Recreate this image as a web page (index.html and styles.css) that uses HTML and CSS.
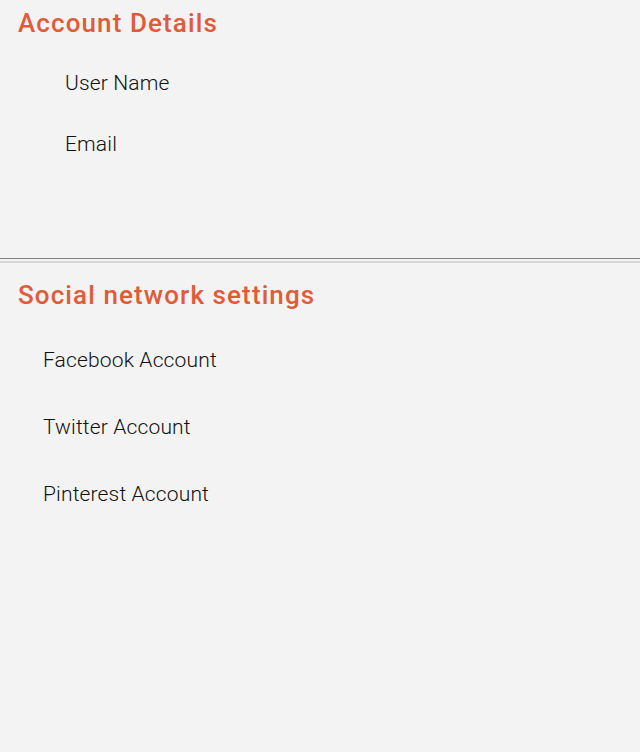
FILE: index.html
```html
<!DOCTYPE html>
<html>
<head>
<meta charset="utf-8">
<link rel="stylesheet" href="styles.css">
</head>
<body>
<section class="account">
  <h2 class="title">Account Details</h2>
  <ul class="fields fields-indent">
    <li class="field">User Name</li>
    <li class="field">Email</li>
  </ul>
</section>
<div class="divider"></div>
<section class="social">
  <h2 class="title">Social network settings</h2>
  <ul class="fields fields-social">
    <li class="field">Facebook Account</li>
    <li class="field">Twitter Account</li>
    <li class="field">Pinterest Account</li>
  </ul>
</section>
</body>
</html>
```
FILE: styles.css
```css
html, body {
  margin: 0;
  padding: 0;
  background: #f3f3f3;
}
body {
  font-family: Roboto, "Noto Sans", sans-serif;
  color: #111111;
}
.account {
  height: 258px;
  padding: 8px 18px 0;
  box-sizing: border-box;
}
.title {
  margin: 0;
  font-size: 26px;
  line-height: 30px;
  font-weight: 500;
  letter-spacing: 1.1px;
  color: #e05b37;
}
.fields {
  list-style: none;
  margin: 0;
  padding: 0;
}
.field {
  font-size: 21px;
  line-height: 25px;
  font-weight: 300;
  letter-spacing: 0.15px;
}
.fields-indent {
  padding-left: 47px;
  margin-top: 33px;
}
.fields-indent .field + .field {
  margin-top: 36px;
}
.divider {
  border-top: 1px solid #808080;
  border-bottom: 2px solid #d6d6d6;
  box-sizing: border-box;
  height: 5px;
}
.social {
  padding: 17px 18px 0;
}
.fields-social {
  padding-left: 25px;
  margin-top: 38px;
}
.fields-social .field + .field {
  margin-top: 42px;
}
```
